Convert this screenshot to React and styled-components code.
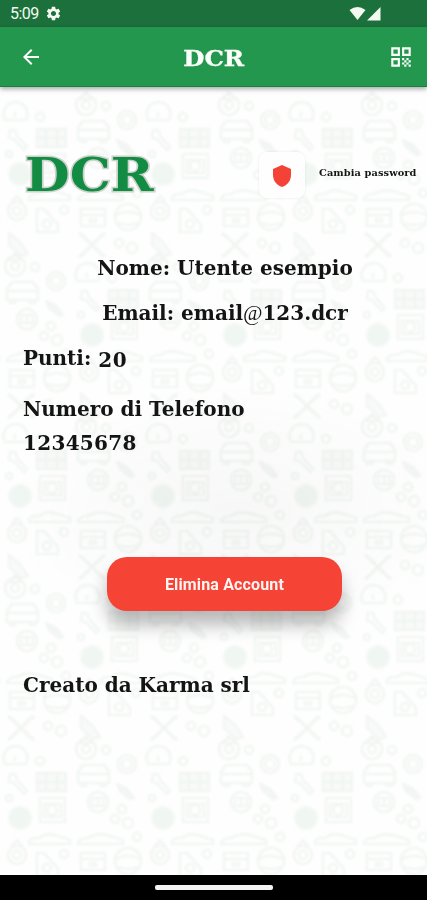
import styled, { createGlobalStyle } from "styled-components";
import { MdArrowBack, MdQrCode, MdSettings, MdShield } from "react-icons/md";

const GlobalStyle = createGlobalStyle`
  * {
    box-sizing: border-box;
  }

  body {
    margin: 0;
    background: #fdfefd;
  }
`;

const Screen = styled.div`
  width: 427px;
  height: 900px;
  display: flex;
  flex-direction: column;
  overflow: hidden;
  font-family: "DejaVu Serif", serif;
  font-weight: 700;
  color: #141414;
`;

const StatusBar = styled.div`
  flex: none;
  display: flex;
  align-items: center;
  height: 27px;
  padding: 0 45px 0 10px;
  background: #1c703c;
  color: #f4faf0;
`;

const Clock = styled.span`
  font-family: Roboto, sans-serif;
  font-size: 16px;
  font-weight: 400;
  letter-spacing: -0.5px;
  margin-right: 6px;
`;

const StatusIcons = styled.svg`
  width: 33px;
  height: 15px;
  margin-left: auto;
`;

const AppBar = styled.header`
  flex: none;
  position: relative;
  z-index: 1;
  display: flex;
  align-items: center;
  justify-content: space-between;
  height: 60px;
  padding: 0 13px 0 19px;
  background: #24974f;
  border-bottom: 1px solid #128440;
  box-shadow: 0 2px 5px rgba(0, 0, 0, 0.35);
  color: #fbfffa;

  svg {
    margin-top: 1px;
  }
`;

const AppTitle = styled.h1`
  margin: 2px 3px 0 0;
  font-size: 23px;
  transform: scaleX(1.06);
  -webkit-text-stroke: 0.4px currentColor;
`;

const Content = styled.main`
  flex: 1;
  position: relative;
  display: flex;
  flex-direction: column;
  background: #fdfefd;
`;

const Wallpaper = styled.svg`
  position: absolute;
  inset: 0;
  width: 100%;
  height: 100%;
`;

const TopRow = styled.div`
  position: relative;
  display: flex;
  align-items: center;
  height: 72px;
  margin-top: 52px;
  padding-left: 25px;
`;

const Logo = styled.div`
  width: 131px;
  font-size: 46px;
  line-height: 72px;
  color: #128b43;
  -webkit-text-stroke: 3px #cdd1cb;
  paint-order: stroke fill;
  transform: scaleX(1.12);
  transform-origin: left;
`;

const ShieldButton = styled.button`
  display: flex;
  align-items: center;
  justify-content: center;
  width: 46px;
  height: 46px;
  margin-left: 103px;
  padding: 2px 0 0;
  border: none;
  border-radius: 8px;
  background: #fefefe;
  box-shadow: 0 0 3px rgba(0, 0, 0, 0.08);
  color: #f44336;
`;

const PasswordLabel = styled.span`
  margin: -5px 0 0 14px;
  font-size: 9.8px;
  letter-spacing: 0.1px;
  white-space: nowrap;
`;

const Line = styled.p`
  position: relative;
  align-self: ${(props) => (props.$center ? "center" : "flex-start")};
  margin: ${(props) => props.$top}px 0 0 23px;
  font-size: 20px;
  line-height: 24px;
  letter-spacing: ${(props) => props.$spacing || 0}px;
  white-space: nowrap;
`;

const At = styled.span`
  font-family: "Liberation Serif", serif;
  font-size: 21px;
  line-height: 20px;
  font-weight: 400;
  font-style: italic;
  letter-spacing: 0;
`;

const Points = styled.span`
  display: inline-block;
  margin-left: 7px;
  padding-top: 2px;
  vertical-align: top;
  letter-spacing: 0.4px;
`;

const DeleteButton = styled.button`
  position: relative;
  align-self: center;
  flex: none;
  width: 235px;
  height: 54px;
  margin: 102px 0 0 22px;
  border: none;
  border-radius: 20px;
  background: #f54336;
  box-shadow: 0 14px 18px rgba(0, 0, 0, 0.27);
  color: #fff4f2;
  font-family: Roboto, sans-serif;
  font-size: 16px;
  font-weight: 700;
  letter-spacing: 0.15px;
`;

const NavBar = styled.div`
  flex: none;
  display: flex;
  justify-content: center;
  height: 25px;
  padding-top: 10px;
  background: #000;
`;

const HomeIndicator = styled.div`
  width: 118px;
  height: 5px;
  border-radius: 2px;
  background: #f4f4f4;
`;

const Nut = ({ x, y, r = 4 }) => <circle cx={x} cy={y} r={r} />;

// one set of garage doodles, centred on the filled disc
const Doodles = () => (
  <g>
    <circle cx="0" cy="0" r="11" fill="#f0f6f1" stroke="#f4f8f5" />
    <path d="M-15-54a12 12 0 1 1 21 0zM-5-57v-5" />
    <Nut x={20} y={-57} />
    <path d="M-10-44l5 0 2 6 10 11-3 3-10-11-5-1z" />
    <path d="M17-45h29v18h-29zM17-36h29M26-45v18M37-45v18" fill="#f7faf8" />
    <path d="M20-20h25v24h-25zM24-14h17v13h-17z" />
    <circle cx="32" cy="-8" r="5" />
    <Nut x={-11} y={-20} r={3} />
    <path d="M66-82l6 7h-12z" />
    <circle cx="66" cy="-69" r="10" />
    <circle cx="66" cy="-69" r="4" />
    <Nut x={86} y={-68} />
    <path d="M58-35v-11l5-7h21l5 7v11zM58-44h31M61-35v3h5v-3M81-35v3h5v-3" />
    <circle cx="107" cy="-54" r="9" />
    <circle cx="107" cy="-54" r="5" />
    <path d="M97-34l10 5 7 9-4 1-10-8z" fill="#f3f6f4" />
    <circle cx="78" cy="-16" r="10" />
    <path d="M72-20h12v8h-12zM78-20v8" />
    <Nut x={95} y={1} />
    <Nut x={108} y={5} r={5} />
    <Nut x={102} y={-9} />
    <path d="M9 24q0-4 10-4 8-6 19-2l12 4v4H9zM58 25q2-5 10-5 10-6 22-2l13 4v4H58z" />
    <Nut x={117} y={19} />
    <path d="M-3 22l5 6h-10z" />
    <circle cx="-3" cy="37" r="9" />
    <circle cx="-3" cy="37" r="4" />
    <path d="M17 58V35h7l14 16v7z" />
    <circle cx="27" cy="50" r="4" />
    <Nut x={44} y={36} r={4} />
    <path d="M61 35h24v17h-24zM61 41h24M70 45h6v3h-6z" />
    <circle cx="108" cy="43" r="13" />
    <path d="M95 41q13-6 26 0M97 49q11 4 22 0" />
    <path d="M62 61l20 20M82 61L62 81M59 59l5 4M85 59l-5 4M59 83l5-4M85 83l-5-4" strokeWidth="3" />
    <Nut x={99} y={69} r={4} />
    <Nut x={112} y={74} r={5} />
    <path d="M-11 59l11 9 8 12-7 2-12-11z" fill="#f8faf9" />
  </g>
);

const Background = () => {
  const spots = [];
  for (let row = 0; row < 6; row++) {
    for (let col = -2; col < 4; col++) {
      spots.push({ x: 20 + col * 143 + (row % 2) * 72, y: 87 + row * 161 });
    }
  }
  return (
    <Wallpaper viewBox="0 0 427 788">
      <defs>
        <radialGradient id="shade">
          <stop offset="0" stopColor="#777" stopOpacity="0.05" />
          <stop offset="1" stopColor="#777" stopOpacity="0" />
        </radialGradient>
        <filter id="soften" colorInterpolationFilters="sRGB">
          <feGaussianBlur stdDeviation="0.8" />
        </filter>
      </defs>
      <g
        fill="none"
        stroke="#f1f5f2"
        strokeWidth="2.2"
        strokeLinejoin="round"
        filter="url(#soften)"
      >
        {spots.map((s) => (
          <g key={`${s.x}-${s.y}`} transform={`translate(${s.x} ${s.y})`}>
            <Doodles />
          </g>
        ))}
      </g>
      <ellipse cx="235" cy="425" rx="230" ry="130" fill="url(#shade)" />
    </Wallpaper>
  );
};

export default function App() {
  return (
    <Screen>
      <GlobalStyle />
      <StatusBar>
        <Clock>5:09</Clock>
        <MdSettings size={17} />
        <StatusIcons viewBox="0 0 33 15" fill="currentColor">
          <path d="M0.5 4Q8.5-2 16.5 4L8.5 14z" />
          <path d="M18 14.5L31.5 1v13.5z" />
        </StatusIcons>
      </StatusBar>
      <AppBar>
        <MdArrowBack size={24} />
        <AppTitle>DCR</AppTitle>
        <MdQrCode size={26} />
      </AppBar>
      <Content>
        <Background />
        <TopRow>
          <Logo>DCR</Logo>
          <ShieldButton>
            <MdShield size={24} />
          </ShieldButton>
          <PasswordLabel>Cambia password</PasswordLabel>
        </TopRow>
        <Line $center $top={45}>Nome: Utente esempio</Line>
        <Line $center $top={21}>
          Email: email<At>@</At>123.dcr
        </Line>
        <Line $top={21}>
          Punti:<Points>20</Points>
        </Line>
        <Line $top={25}>Numero di Telefono</Line>
        <Line $top={10} $spacing={0.3}>12345678</Line>
        <DeleteButton>Elimina Account</DeleteButton>
        <Line $top={62}>Creato da Karma srl</Line>
      </Content>
      <NavBar>
        <HomeIndicator />
      </NavBar>
    </Screen>
  );
}
